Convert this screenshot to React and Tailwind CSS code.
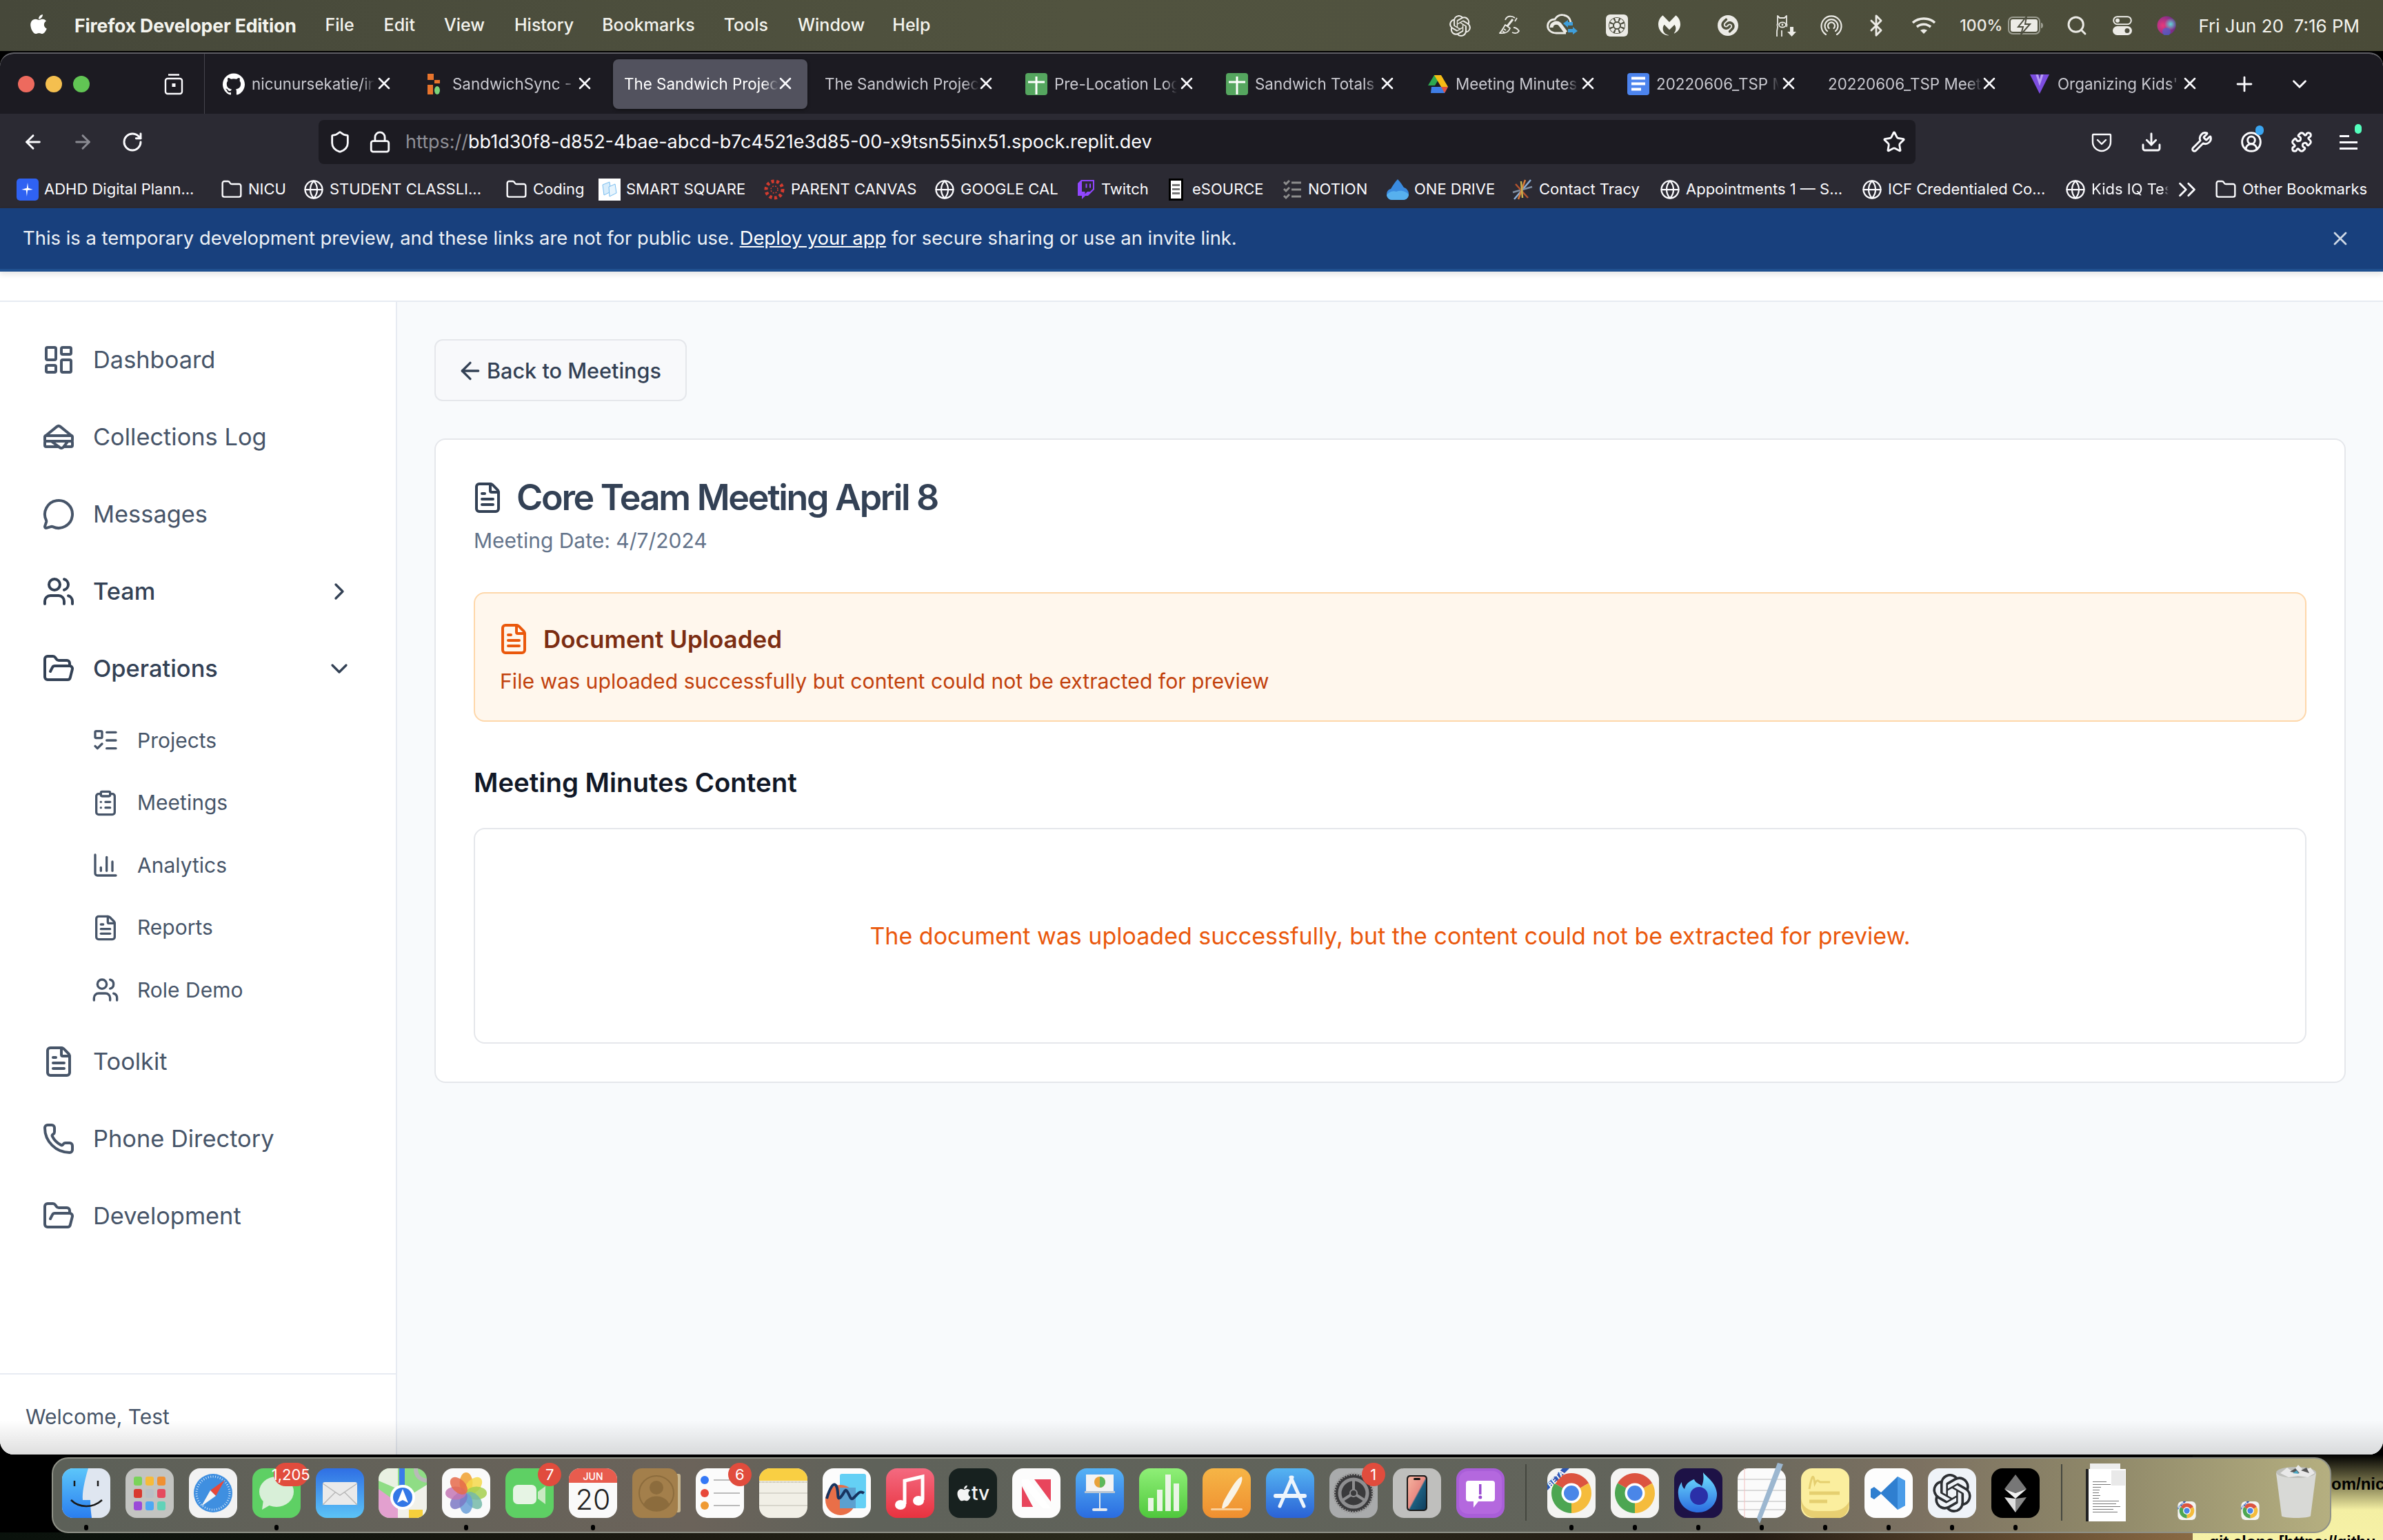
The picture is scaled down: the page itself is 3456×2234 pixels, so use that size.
import React from "react";
import {
  LayoutDashboard, Sandwich, MessageCircle, Users, FolderOpen, ListTodo, ClipboardList, ChartColumn, FileText, Phone,
  ChevronRight, ChevronDown, ArrowLeft, ArrowRight, X, RotateCw, Shield, Lock, Star, Download, Wrench, CircleUserRound,
  Puzzle, Globe, Folder, Plus, Search, Bluetooth, ChevronsRight,
} from "lucide-react";
import { SiOpenai, SiShazam, SiMalwarebytes, SiTwitch, SiGithub } from "react-icons/si";
import { FaApple } from "react-icons/fa";

function Fan() {
  return (
    <svg viewBox="0 0 32 32" className="h-[32px] w-[32px]">
      <rect width="32" height="32" rx="6" fill="#ecebe6" />
      <circle cx="16" cy="16" r="12" fill="#4c4d3e" />
      {[0, 45, 90, 135, 180, 225, 270, 315].map((a) => (
        <path key={a} d="M16 16 L13 5 L19 5 Z" fill="#ecebe6" transform={`rotate(${a} 16 16)`} />
      ))}
      <circle cx="16" cy="16" r="5" fill="#ecebe6" stroke="#4c4d3e" strokeWidth="2" />
    </svg>
  );
}
function BroomC() {
  return (
    <svg viewBox="0 0 32 32" className="h-[32px] w-[32px]" fill="none" stroke="#ecebe6" strokeWidth="1.8" strokeLinejoin="round">
      <path d="M24 5c-5-4-12-3-14 3M27 5l-3 5M20 26c4 2 8 1 10-2-2-3-5-5-8-5" />
      <path d="M21 7L13 17" strokeWidth="3" />
      <path d="M10 15l7 5c-2 5-7 8-15 7 3-3 5-7 8-12z" />
      <path d="M8 21l3 2M6 24l3 2" />
    </svg>
  );
}
function CloudSync() {
  return (
    <svg viewBox="0 0 46 34" className="h-[34px] w-[46px]" fill="none">
      <path d="M14 28C6 28 1.5 23 1.5 17.5S6 8 12 8c3-5 8-7 13-6 6 1 9 5 10 10M14 28h14" stroke="#ecebe6" strokeWidth="2.8" />
      <path d="M7 20c0-6 7-9 12-5l9 12" stroke="#ecebe6" strokeWidth="5" />
      <path d="M24 14l7-5v3h7v5h-7v3z" fill="#3f9fdc" />
      <path d="M45 25l-7 5v-3h-7v-5h7v-3z" fill="#3f9fdc" />
    </svg>
  );
}
function Alpaca() {
  return (
    <svg viewBox="0 0 30 34" className="h-[34px] w-[30px]" fill="none" stroke="#ecebe6" strokeWidth="1.8" strokeLinejoin="round">
      <path d="M2 33V26c0-3 1-4 1-7 -1-2-1-3 0-5V3l3 3h7l3-3v11c1 2 1 3 0 5" />
      <ellipse cx="10" cy="16" rx="5" ry="3.6" />
      <circle cx="10" cy="16" r="1.4" fill="#ecebe6" stroke="none" />
      <path d="M9 33V24" />
      <path d="M21 19h5v7h4l-6.5 7L17 26h4z" fill="#ecebe6" stroke="none" />
    </svg>
  );
}
function Airdrop() {
  return (
    <svg viewBox="0 0 32 32" className="h-[32px] w-[32px]" fill="none" stroke="#ecebe6" strokeWidth="2.2" strokeLinecap="round">
      <path d="M8 29a14.5 14.5 0 1 1 16 0" />
      <path d="M10 24a9.5 9.5 0 1 1 12 0" />
      <path d="M12.5 20a5 5 0 1 1 7 0" />
    </svg>
  );
}
function WifiGlyph() {
  return (
    <svg viewBox="0 0 36 26" className="h-[26px] w-[36px]" fill="none" stroke="#ecebe6" strokeWidth="3.6">
      <path d="M2 9c9-8 23-8 32 0" />
      <path d="M8 15c6-5 14-5 20 0" />
      <path d="M18 25l-5-5c3-2 7-2 10 0z" fill="#ecebe6" stroke="none" />
    </svg>
  );
}
function Battery() {
  return (
    <svg viewBox="0 0 52 26" className="h-[26px] w-[52px]">
      <rect x="1" y="1" width="45" height="24" rx="6" fill="none" stroke="#9d9e92" strokeWidth="2" />
      <rect x="4" y="4" width="39" height="18" rx="3" fill="#ecebe6" />
      <path d="M48 9c2 0 3 2 3 4s-1 4-3 4z" fill="#9d9e92" />
      <path d="M27 0L15 15h7l-3 11 13-15h-7z" fill="#ecebe6" stroke="#4c4d3e" strokeWidth="2" />
    </svg>
  );
}
function Control() {
  return (
    <svg viewBox="0 0 28 28" className="h-[28px] w-[28px]">
      <rect x="1.2" y="1.2" width="25.6" height="11" rx="5.5" fill="none" stroke="#ecebe6" strokeWidth="2" />
      <circle cx="7" cy="6.7" r="3" fill="#ecebe6" />
      <rect y="15" width="28" height="13" rx="6.5" fill="#ecebe6" />
      <circle cx="21" cy="21.5" r="3.5" fill="#4c4d3e" />
    </svg>
  );
}
function Siri() {
  return (
    <svg viewBox="0 0 28 28" className="h-[28px] w-[28px]">
      <defs>
        <radialGradient id="siriA" cx="30%" cy="50%" r="70%"><stop offset="0" stopColor="#e83a7c" /><stop offset="1" stopColor="#6a2a8a" /></radialGradient>
        <radialGradient id="siriB" cx="50%" cy="50%" r="50%"><stop offset="0" stopColor="#5cd8d8" /><stop offset="1" stopColor="#5cd8d8" stopOpacity="0" /></radialGradient>
      </defs>
      <circle cx="14" cy="14" r="13.5" fill="url(#siriA)" />
      <circle cx="20" cy="12" r="9" fill="url(#siriB)" />
      <circle cx="14" cy="23" r="6" fill="#3a6ad8" opacity=".6" />
    </svg>
  );
}

const menus = [
  ["File", "ml-[42px]"], ["Edit", "ml-[43px]"], ["View", "ml-[42px]"], ["History", "ml-[43px]"],
  ["Bookmarks", "ml-[41px]"], ["Tools", "ml-[42px]"], ["Window", "ml-[43px]"], ["Help", "ml-[40px]"],
];

function MenuBar() {
  return (
    <div className="flex h-[74px] items-center bg-[linear-gradient(90deg,#46483a,#51533f_45%,#50523f_60%,#4a4b38)] pl-[42px] pr-[34px] text-[25px] text-[#f4f4ee]">
      <FaApple className="h-[32px] w-[28px] -translate-y-[2px] text-white" />
      <span className="ml-[38px] text-[26.7px] font-bold tracking-[-0.2px]">Firefox Developer Edition</span>
      {menus.map(([m, c]) => (
        <span key={m} className={`${c} font-medium`}>{m}</span>
      ))}
      <div className="ml-auto flex items-center">
        <SiOpenai className="h-[31px] w-[31px] text-[#ecebe6]" />
        <span className="ml-[40px] flex"><BroomC /></span>
        <span className="ml-[38px] flex"><CloudSync /></span>
        <span className="ml-[40px] flex"><Fan /></span>
        <SiMalwarebytes className="ml-[44px] h-[32px] w-[32px] text-[#f4f4ee]" />
        <SiShazam className="ml-[54px] h-[30px] w-[30px] text-[#ecebe6]" />
        <span className="ml-[54px] flex"><Alpaca /></span>
        <span className="ml-[35px] flex"><Airdrop /></span>
        <Bluetooth className="ml-[32px] h-[34px] w-[34px] text-[#ecebe6]" strokeWidth={2} />
        <span className="ml-[34px] flex"><WifiGlyph /></span>
        <span className="ml-[34px] text-[23px] font-medium text-[#ecebe6]">100%</span>
        <span className="ml-[8px] flex"><Battery /></span>
        <Search className="ml-[32px] h-[32px] w-[32px] text-[#ecebe6]" strokeWidth={2.2} />
        <span className="ml-[36px] flex"><Control /></span>
        <span className="ml-[36px] flex"><Siri /></span>
        <span className="ml-[32px] whitespace-pre text-[26px] text-[#f4f4ee]">Fri Jun 20  7:16 PM</span>
      </div>
    </div>
  );
}

function SheetIcon() {
  return (
    <svg viewBox="0 0 32 32" className="h-[32px] w-[32px]">
      <rect width="32" height="32" rx="4" fill="#55a65f" />
      <path d="M4 13h24M16 5v26" stroke="#fff" strokeWidth="3" />
    </svg>
  );
}
function DocsIcon() {
  return (
    <svg viewBox="0 0 32 32" className="h-[32px] w-[32px]">
      <rect width="32" height="32" rx="4" fill="#4c84ee" />
      <path d="M6 5.5h20v4H6zM6 13.5h20v4H6zM6 21.5h14v4H6z" fill="#fff" />
    </svg>
  );
}
function DriveIcon() {
  return (
    <svg viewBox="0 0 30 28" className="h-[28px] w-[30px]">
      <path d="M10 1h10L11 16H1z" fill="#2da94f" />
      <path d="M10 1h10l10 17H20z" fill="#f6bc15" />
      <path d="M6 18h24l-5 9H5z" fill="#3f7ee6" />
      <path d="M30 18l-5 9-5-9z" fill="#e2543f" />
    </svg>
  );
}
function ReplitIcon() {
  return (
    <svg viewBox="0 0 22 32" className="h-[32px] w-[22px]">
      <path d="M1 1h9v9H1z" fill="#e8742c" />
      <path d="M11 10h8v5h-8z" fill="#e8742c" />
      <path d="M1 17h8v14H1z" fill="#e8742c" />
      <ellipse cx="15" cy="25" rx="4" ry="6" fill="#7bd37a" />
    </svg>
  );
}
function VioletIcon() {
  return (
    <svg viewBox="0 0 30 32" className="h-[32px] w-[28px]">
      <path d="M0 1h30L15 31z" fill="#7c4de0" />
      <path d="M9 1l6 18 6-18" fill="#b79cf5" />
      <path d="M13 1l2 8 2-8" fill="#5c34b8" />
    </svg>
  );
}

const tabs = [
  { t: "nicunursekatie/interactive", i: <SiGithub className="h-[32px] w-[32px] text-white" /> },
  { t: "SandwichSync - Replit", i: <ReplitIcon /> },
  { t: "The Sandwich Project", active: true },
  { t: "The Sandwich Project" },
  { t: "Pre-Location Log", i: <SheetIcon /> },
  { t: "Sandwich Totals", i: <SheetIcon /> },
  { t: "Meeting Minutes", i: <DriveIcon /> },
  { t: "20220606_TSP Meeting", i: <DocsIcon /> },
  { t: "20220606_TSP Meeting" },
  { t: "Organizing Kids' Events", i: <VioletIcon /> },
];

function TabStrip() {
  return (
    <div className="flex h-[87px] items-center bg-[#1c1b22]">
      <div className="flex h-full w-[222px] shrink-0 items-center pl-[26px]">
        <span className="h-[24px] w-[24px] rounded-full bg-[#ed6a5e]" />
        <span className="ml-[16px] h-[24px] w-[24px] rounded-full bg-[#f4bf4f]" />
        <span className="ml-[16px] h-[24px] w-[24px] rounded-full bg-[#61c554]" />
      </div>
      <div className="flex h-full w-[75px] shrink-0 items-center border-r border-[#45454d] pl-[14px]">
        <svg viewBox="0 0 32 32" className="h-[32px] w-[32px]" fill="none" stroke="#fbfbfe" strokeWidth="2.4">
          <path d="M8 2.5h16" />
          <rect x="4" y="8" width="24" height="22" rx="3" />
          <rect x="13.5" y="15" width="5" height="5" fill="#fbfbfe" stroke="none" />
        </svg>
      </div>
      <div className="ml-[10px] flex items-center gap-[9px]">
        {tabs.map((tab, n) => (
          <div key={n} className={`relative flex h-[72px] w-[282px] shrink-0 items-center rounded-[8px] pl-[16px] ${tab.active ? "bg-[#52525e] shadow-[0_1px_4px_rgba(0,0,0,.5)]" : ""}`}>
            {tab.i ? <span className="mr-[10px] flex w-[32px] shrink-0 items-center justify-center">{tab.i}</span> : null}
            <span className={`overflow-hidden whitespace-nowrap text-[22.4px] [mask-image:linear-gradient(90deg,#000_90%,transparent)] ${tab.i ? "w-[178px]" : "w-[224px]"} ${tab.active ? "text-white" : "text-[#c9c9d0]"}`}>{tab.t}</span>
            <X className="absolute left-[236px] top-[21px] h-[28px] w-[28px] text-[#fbfbfe]" strokeWidth={2.2} />
          </div>
        ))}
      </div>
      <Plus className="ml-[30px] h-[34px] w-[34px] shrink-0 text-[#fbfbfe]" strokeWidth={2} />
      <ChevronDown className="ml-[46px] h-[34px] w-[34px] shrink-0 text-[#fbfbfe]" strokeWidth={2} />
    </div>
  );
}

function PocketIcon() {
  return (
    <svg viewBox="0 0 32 32" className="h-[32px] w-[32px]" fill="none" stroke="#fbfbfe" strokeWidth="2.4" strokeLinecap="round" strokeLinejoin="round">
      <path d="M4 5h24a1 1 0 0 1 1 1v10a13 13 0 0 1-26 0V6a1 1 0 0 1 1-1z" />
      <path d="M10 13l6 6 6-6" />
    </svg>
  );
}
function MenuDot() {
  return (
    <span className="relative flex h-[32px] w-[32px] flex-col justify-center gap-[6px]">
      <span className="h-[3px] w-[14px] bg-[#fbfbfe]" />
      <span className="h-[3px] w-[26px] bg-[#fbfbfe]" />
      <span className="h-[3px] w-[26px] bg-[#fbfbfe]" />
      <span className="absolute -top-[10px] right-[0px] h-[14px] w-[10px] rounded-full bg-[#54ffbd]" />
    </span>
  );
}

function NavBar() {
  const ic = "h-[32px] w-[32px] text-[#fbfbfe]";
  return (
    <div className="flex h-[73px] items-start bg-[#2b2a33] pt-[9px]">
      <div className="flex h-[64px] w-[462px] shrink-0 items-center pl-[32px]">
        <ArrowLeft className={ic} strokeWidth={2.2} />
        <ArrowRight className="ml-[40px] h-[32px] w-[32px] text-[#8a8a92]" strokeWidth={2.2} />
        <RotateCw className={`ml-[40px] ${ic}`} strokeWidth={2.2} />
      </div>
      <div className="flex h-[64px] w-[2316px] shrink-0 items-center rounded-[8px] bg-[#1c1b22] pl-[14px] pr-[14px]">
        <Shield className="h-[34px] w-[34px] text-[#fbfbfe]" strokeWidth={2} />
        <Lock className="ml-[24px] h-[34px] w-[34px] text-[#fbfbfe]" strokeWidth={2} />
        <span className="ml-[20px] text-[27px] text-[#fbfbfe]"><span className="text-[#8f8f96]">https://</span>bb1d30f8-d852-4bae-abcd-b7c4521e3d85-00-x9tsn55inx51.spock.replit.dev</span>
        <Star className="ml-auto h-[34px] w-[34px] text-[#fbfbfe]" strokeWidth={2} />
      </div>
      <div className="flex h-[64px] flex-1 items-center pl-[254px]">
        <span className="flex w-[72px]"><PocketIcon /></span>
        <span className="flex w-[73px]"><Download className={ic} strokeWidth={2.2} /></span>
        <span className="flex w-[72px]"><Wrench className={ic} strokeWidth={2.2} /></span>
        <span className="relative flex w-[73px]">
          <CircleUserRound className={ic} strokeWidth={2.2} />
          <span className="absolute -top-[8px] left-[22px] h-[14px] w-[12px] rounded-full bg-[#3aa5f0]" />
        </span>
        <span className="flex w-[71px]"><Puzzle className={ic} strokeWidth={2.2} /></span>
        <MenuDot />
      </div>
    </div>
  );
}

function G() { return <Globe className="h-[30px] w-[30px] text-[#fbfbfe]" strokeWidth={1.8} />; }
function F() { return <Folder className="h-[32px] w-[32px] text-[#fbfbfe]" strokeWidth={1.8} />; }

const bookmarks = [
  { t: "ADHD Digital Plann...", w: "w-[296px]", i: <span className="flex h-[32px] w-[32px] items-center justify-center rounded-[5px] bg-[#2f62f2]"><svg viewBox="0 0 20 20" className="h-[22px] w-[22px]"><path d="M10 1l1 7 6 2-7 1-1 8-1-8-6-1 7-2z" fill="#fff" /></svg></span> },
  { t: "NICU", w: "w-[120px]", i: <F /> },
  { t: "STUDENT CLASSLI...", w: "w-[293px]", i: <G /> },
  { t: "Coding", w: "w-[135px]", i: <F /> },
  { t: "SMART SQUARE", w: "w-[239px]", i: <svg viewBox="0 0 32 32" className="h-[32px] w-[32px]"><rect width="32" height="32" fill="#fff" /><path d="M6 9l10-4 2 14-10 5z" fill="#d7ecfb" stroke="#78bdf0" /><path d="M15 12l9-4 2 13-10 5z" fill="#e7f4fd" stroke="#78bdf0" /></svg> },
  { t: "PARENT CANVAS", w: "w-[248px]", i: <svg viewBox="0 0 32 32" className="h-[32px] w-[32px]" fill="#d23b2f"><circle cx="16" cy="16" r="12" fill="none" stroke="#d23b2f" strokeWidth="5" strokeDasharray="4 3.4" /><circle cx="16" cy="16" r="5" fill="none" stroke="#d23b2f" strokeWidth="1.5" strokeDasharray="2 2" /></svg> },
  { t: "GOOGLE CAL", w: "w-[206px]", i: <G /> },
  { t: "Twitch", w: "w-[134px]", i: <SiTwitch className="h-[32px] w-[28px] text-[#9146ff]" /> },
  { t: "eSOURCE", w: "w-[166px]", i: <span className="mr-[5px] flex h-[32px] w-[21px] flex-col items-center justify-center gap-[3px] border-[3px] border-black bg-white"><span className="h-[3px] w-[11px] bg-[#777]" /><span className="h-[3px] w-[11px] bg-[#777]" /><span className="h-[3px] w-[11px] bg-[#777]" /></span> },
  { t: "NOTION", w: "w-[150px]", i: <svg viewBox="0 0 28 32" className="h-[32px] w-[28px]" fill="none" stroke="#8d8d8d" strokeWidth="3"><path d="M12 6h14M12 16h14M12 26h14M1 5l3 3 5-5M1 15l3 3 5-5M1 25l3 3 5-5" /></svg> },
  { t: "ONE DRIVE", w: "w-[181px]", i: <svg viewBox="0 0 32 32" className="h-[32px] w-[32px]"><path d="M16 1c4 4 7 9 9 12 4 1 7 5 7 9 0 5-3 9-8 9H7c-4 0-7-4-7-8s2-7 6-8c3-5 6-10 10-14z" fill="#3a8be0" /><path d="M8 31c-4 0-7-3-8-7 4-5 9-7 14-5 7-3 14 0 18 4 0 4-3 8-8 8z" fill="#57b0ee" /></svg> },
  { t: "Contact Tracy", w: "w-[215px]", i: <svg viewBox="0 0 32 32" className="h-[32px] w-[32px]" fill="none" strokeWidth="2.5"><path d="M4 30L28 2" stroke="#8db0d8" /><path d="M10 30L20 2" stroke="#d97b3a" /><path d="M2 20L30 12" stroke="#7f8fa3" /><path d="M6 8l18 20" stroke="#b4532e" /><path d="M16 28L14 4" stroke="#c9b34f" /></svg> },
  { t: "Appointments 1 — S...", w: "w-[293px]", i: <G /> },
  { t: "ICF Credentialed Co...", w: "w-[295px]", i: <G /> },
  { t: "Kids IQ Test", w: "w-[164px]", i: <G />, clip: true },
];

function Bookmarks() {
  return (
    <div className="flex h-[64px] items-center bg-[#2b2a33] pl-[24px] pt-[9px] text-[22px] text-[#fbfbfe]">
      {bookmarks.map((b) => (
        <div key={b.t} className={`flex shrink-0 items-center gap-[8px] ${b.w}`}>
          {b.i}
          <span className={`whitespace-nowrap ${b.clip ? "w-[112px] overflow-hidden [mask-image:linear-gradient(90deg,#000_92%,transparent)]" : ""}`}>{b.t}</span>
        </div>
      ))}
      <div className="w-[53px] shrink-0"><ChevronsRight className="-ml-[8px] h-[42px] w-[42px]" strokeWidth={1.6} /></div>
      <div className="flex shrink-0 items-center gap-[8px]"><F /><span className="whitespace-nowrap">Other Bookmarks</span></div>
    </div>
  );
}

function Banner() {
  return (
    <div className="relative z-10 flex h-[92px] items-center border-b-[4px] border-[#20508f] bg-[#18407d] pl-[33px] pr-[46px] text-[27.4px] text-[#eef2f7] shadow-[0_4px_8px_rgba(0,0,0,.1)]">
      <span>This is a temporary development preview, and these links are not for public use. <span className="text-white underline">Deploy your app</span> for secure sharing or use an invite link.</span>
      <X className="ml-auto h-[32px] w-[32px] text-[#cfd9e6]" strokeWidth={2} />
    </div>
  );
}

const navTop = [
  { t: "Dashboard", I: LayoutDashboard },
  { t: "Collections Log", I: Sandwich },
  { t: "Messages", I: MessageCircle },
  { t: "Team", I: Users, strong: true, right: <ChevronRight className="h-[40px] w-[40px]" strokeWidth={2} /> },
  { t: "Operations", I: FolderOpen, strong: true, right: <ChevronDown className="h-[40px] w-[40px]" strokeWidth={2} /> },
];
const navSub = [
  { t: "Projects", I: ListTodo },
  { t: "Meetings", I: ClipboardList },
  { t: "Analytics", I: ChartColumn },
  { t: "Reports", I: FileText },
  { t: "Role Demo", I: Users },
];
const navBottom = [
  { t: "Toolkit", I: FileText },
  { t: "Phone Directory", I: Phone },
  { t: "Development", I: FolderOpen },
];

function NavItem({ n }) {
  const I = n.I;
  return (
    <div className={`flex h-[112px] items-center pl-[61px] pr-[62px] text-[34.4px] ${n.strong ? "font-medium text-[#334155]" : "text-[#475569]"}`}>
      <I className="h-[48px] w-[48px] shrink-0" strokeWidth={2} />
      <span className="ml-[26px]">{n.t}</span>
      {n.right ? <span className="ml-auto flex">{n.right}</span> : null}
    </div>
  );
}

function Sidebar() {
  return (
    <aside className="flex w-[576px] shrink-0 flex-col border-r-2 border-[#e7ebf2] bg-white">
      <nav className="flex-1 pt-[28px]">
        {navTop.map((n) => <NavItem key={n.t} n={n} />)}
        <div className="mb-[2px] mt-[3px]">
          {navSub.map((n) => {
            const I = n.I;
            return (
              <div key={n.t} className="flex h-[90.5px] items-center pl-[133px] text-[30px] text-[#475569]">
                <I className="h-[40px] w-[40px] shrink-0" strokeWidth={2} />
                <span className="ml-[26px]">{n.t}</span>
              </div>
            );
          })}
        </div>
        {navBottom.map((n) => <NavItem key={n.t} n={n} />)}
      </nav>
      <div className="flex h-[118px] items-start border-t-2 border-[#e7ebf2] pl-[37px] pt-[37px] text-[30px] leading-[48px] text-[#475569]">Welcome, Test</div>
    </aside>
  );
}

function Main() {
  return (
    <main className="flex-1 bg-[#f8fafc] pl-[54px] pr-[54px] pt-[54px]">
      <button className="flex h-[90px] w-[366px] items-center rounded-[12px] border-2 border-[#e5e7eb] bg-[#f8f9fb] pl-[30px] pt-[2px] text-[30.6px] font-medium text-[#334155]">
        <ArrowLeft className="h-[40px] w-[40px]" strokeWidth={2} />
        <span className="ml-[4px]">Back to Meetings</span>
      </button>
      <section className="mt-[54px] rounded-[16px] border-2 border-[#e5e7eb] bg-white px-[55px] pb-[55px] pt-[52px]">
        <div className="flex h-[64px] items-center">
          <FileText className="-ml-[4px] h-[48px] w-[48px] text-[#334155]" strokeWidth={2} />
          <h1 className="ml-[18px] text-[52px] font-semibold leading-[64px] tracking-[-2.3px] text-[#334155]">Core Team Meeting April 8</h1>
        </div>
        <p className="mt-[6px] text-[30px] leading-[48px] text-[#64748b]">Meeting Date: 4/7/2024</p>
        <div className="mt-[51px] rounded-[16px] border-2 border-[#fed7aa] bg-[#fff7ed] px-[36px] pb-[33px] pt-[42px]">
          <div className="flex h-[48px] items-center">
            <FileText className="-ml-[4px] h-[48px] w-[48px] text-[#ea580c]" strokeWidth={2} />
            <h3 className="ml-[19px] text-[35px] font-semibold leading-[48px] text-[#7c2d12]">Document Uploaded</h3>
          </div>
          <p className="mt-[13px] text-[30.2px] leading-[48px] text-[#c2410c]">File was uploaded successfully but content could not be extracted for preview</p>
        </div>
        <h2 className="mt-[60px] text-[38.4px] font-semibold leading-[56px] text-[#111827]">Meeting Minutes Content</h2>
        <div className="mt-[38px] flex h-[313px] items-center justify-center rounded-[16px] border-2 border-[#e5e7eb] bg-white text-[34px] text-[#ea580c]">
          The document was uploaded successfully, but the content could not be extracted for preview.
        </div>
      </section>
    </main>
  );
}

function Tile({ children, badge, dot, className = "" }) {
  return (
    <div className={`relative h-[72px] w-[70px] shrink-0 ${className}`}>
      <svg viewBox="0 0 70 72" className="h-[72px] w-[70px] overflow-visible">{children}</svg>
      {badge ? <span className={`absolute -top-[8px] flex h-[34px] items-center justify-center rounded-full bg-[#e14c3d] text-[22px] text-white ${badge.length > 1 ? "-right-[11px] w-[50px] text-[19px]" : "-right-[11px] w-[34px]"}`}>{badge}</span> : null}
      {dot ? <span className="absolute -bottom-[18px] left-[32px] h-[8px] w-[6px] rounded-full bg-black" /> : null}
    </div>
  );
}
const Bg = ({ f }) => <rect x="0" y="0" width="70" height="72" rx="16" fill={f} />;

function ChromeArt({ beta }) {
  return (
    <>
      <Bg f="#f4f4f2" />
      <path d="M35 36L9.9 21.5A29 29 0 0 1 60.1 21.5Z" fill="#dc5440" />
      <path d="M35 36L60.1 21.5A29 29 0 0 1 35 65Z" fill="#f5bc3c" />
      <path d="M35 36L35 65A29 29 0 0 1 9.9 21.5Z" fill="#4da652" />
      <circle cx="35" cy="36" r="14.5" fill="#fff" />
      <circle cx="35" cy="36" r="11" fill="#4a86e8" />
      {beta ? (
        <g>
          <path d="M0 32L0 22 22 0H32z" fill="#2d58b5" />
          <text x="4" y="26" fontSize="11" fontWeight="700" fill="#fff" fontFamily="Inter,sans-serif" transform="rotate(-48 8 26)" letterSpacing=".5" fontStyle="italic">BETA</text>
        </g>
      ) : null}
    </>
  );
}

function Dock() {
  return (
    <div className="ml-[75px] mt-[4px] flex h-[110px] w-[3306px] items-start gap-[21.9px] rounded-[24px] border-2 border-[#8f9187] bg-[linear-gradient(90deg,#5c6058_0%,#6b635a_28%,#5f625a_36%,#62645b_70%,#7c7161_82%,#8f8869_90%,#b5af80_100%)] pl-[13px] pt-[14px]">
      <Tile dot>
        <defs><linearGradient id="fa" x1="0" y1="0" x2="0" y2="1"><stop offset="0" stopColor="#5cc6fa" /><stop offset="1" stopColor="#2a7ef0" /></linearGradient></defs>
        <Bg f="#dfe6f0" />
        <path d="M16 0H38C32 20 29 36 30 46H41C41 56 42 64 43 72H16A16 16 0 0 1 0 56V16A16 16 0 0 1 16 0Z" fill="url(#fa)" />
        <path d="M18 18v8M52 18v8" stroke="#1a1a1a" strokeWidth="2.5" />
        <path d="M13 46c12 12 32 12 45 0" fill="none" stroke="#1a1a1a" strokeWidth="2.5" />
      </Tile>
      <Tile>
        <Bg f="#c3c4c1" />
        {[["#7ad35a", 12, 12], ["#f6bb3a", 29, 12], ["#f09033", 46, 12], ["#d8392e", 12, 30], ["#b9c0c6", 29, 30], ["#e54a5e", 46, 30], ["#9a4ad8", 12, 48], ["#4da8f4", 29, 48], ["#62d2b8", 46, 48]].map(([c, x, y]) => (
          <rect key={c} x={x} y={y} width="12" height="13" rx="3" fill={c} />
        ))}
      </Tile>
      <Tile>
        <Bg f="#f2f2f2" />
        <circle cx="35" cy="36" r="28" fill="#3f8fe0" />
        <circle cx="35" cy="36" r="24" fill="none" stroke="#cfe4f8" strokeWidth="3" strokeDasharray="1 2.5" />
        <path d="M52 17L31 32l8 8z" fill="#e8483a" />
        <path d="M18 55l13-23 8 8z" fill="#f5f5f5" />
      </Tile>
      <Tile badge="1,205" dot>
        <Bg f="#5ed064" />
        <ellipse cx="35" cy="34" rx="25" ry="22" fill="#d8efd8" />
        <path d="M16 46l-2 14 14-8z" fill="#d8efd8" />
      </Tile>
      <Tile>
        <defs><linearGradient id="ma" x1="0" y1="0" x2="0" y2="1"><stop offset="0" stopColor="#2f6fe4" /><stop offset="1" stopColor="#5cc4f7" /></linearGradient></defs>
        <Bg f="url(#ma)" />
        <rect x="10" y="20" width="50" height="33" rx="3" fill="#eaeaea" />
        <path d="M10 22l25 17 25-17M10 53l18-18M60 53L42 35" fill="none" stroke="#b8b8b8" strokeWidth="1.5" />
      </Tile>
      <Tile>
        <clipPath id="mc"><rect width="70" height="72" rx="16" /></clipPath>
        <g clipPath="url(#mc)">
          <rect width="70" height="72" fill="#8fdd85" />
          <path d="M0 30L28 50 28 72H0z" fill="#e3a0cf" />
          <path d="M0 0h28v30L0 18z" fill="#f3f3ec" opacity=".9" />
          <path d="M28 50L70 24V72H28z" fill="#f1f1ea" />
          <path d="M44 60h20v12H44z" fill="#f5cf3c" />
          <path d="M30 0h8v30h-8z" fill="#3a7bea" />
          <path d="M54 0c0 12 6 16 16 18" fill="none" stroke="#b9b9b9" strokeWidth="6" />
          <circle cx="35" cy="42" r="18" fill="#fff" />
          <circle cx="35" cy="42" r="14" fill="#3277e6" />
          <path d="M35 30l8 20-8-4-8 4z" fill="#fff" />
        </g>
      </Tile>
      <Tile dot>
        <Bg f="#fafafa" />
        {[["#f0a02f", 0], ["#f5d84a", 45], ["#a4cf4d", 90], ["#74b9a8", 135], ["#6a9fd8", 180], ["#7b78c4", 225], ["#c376b4", 270], ["#e56a4a", 315]].map(([c, a]) => (
          <ellipse key={a} cx="35" cy="21" rx="9.5" ry="15" fill={c} opacity=".85" transform={`rotate(${a} 35 36)`} />
        ))}
      </Tile>
      <Tile badge="7">
        <Bg f="#5ed064" />
        <rect x="11" y="24" width="34" height="28" rx="7" fill="#e6f4e4" />
        <path d="M47 34l11-8v26l-11-8z" fill="#c8e9c2" />
      </Tile>
      <Tile dot>
        <Bg f="#fafafa" />
        <path d="M16 0H54A16 16 0 0 1 70 16V21H0V16A16 16 0 0 1 16 0Z" fill="#e85c4e" />
        <text x="35" y="17" textAnchor="middle" fontSize="14" fontWeight="500" fill="#fff" fontFamily="Inter,sans-serif">JUN</text>
        <text x="35" y="60" textAnchor="middle" fontSize="41" fontWeight="300" fill="#222" fontFamily="Inter,sans-serif">20</text>
      </Tile>
      <Tile>
        <rect x="60" y="8" width="10" height="56" rx="3" fill="#c8b790" />
        <rect x="0" y="0" width="66" height="72" rx="14" fill="#a37f4b" />
        <circle cx="35" cy="36" r="25" fill="none" stroke="#8c6c3d" strokeWidth="2" />
        <circle cx="35" cy="28" r="10" fill="#8c6c3d" />
        <path d="M16 54c4-18 34-18 38 0a25 25 0 0 1-38 0z" fill="#8c6c3d" />
      </Tile>
      <Tile badge="6">
        <Bg f="#fbfbfb" />
        <circle cx="13" cy="17" r="6" fill="#3478f6" /><circle cx="13" cy="36" r="6" fill="#e8483a" /><circle cx="13" cy="54" r="6" fill="#ef9a33" />
        <path d="M26 17h38M26 36h38M26 54h38" stroke="#bbb" strokeWidth="2" />
      </Tile>
      <Tile>
        <Bg f="#f1efe6" />
        <path d="M16 0H54A16 16 0 0 1 70 16V18H0V16A16 16 0 0 1 16 0Z" fill="#f9cf43" />
        <path d="M0 36h70M0 54h70" stroke="#d8d6cc" strokeWidth="2" />
        <path d="M0 20h70" stroke="#bdb9a8" strokeWidth="2" strokeDasharray="1 1" />
      </Tile>
      <Tile>
        <Bg f="#fcfcfc" />
        <rect x="25" y="8" width="38" height="50" rx="3" fill="#64d0f5" />
        <circle cx="26" cy="46" r="22" fill="#e96f48" />
        <rect x="25" y="28" width="23" height="30" fill="#5ba0d0" />
        <path d="M6 44c4-14 10-26 14-18s0 22 6 16 6-14 10-8 4 14 10 8 8-10 14-6" fill="none" stroke="#17335f" strokeWidth="4" />
      </Tile>
      <Tile>
        <defs><linearGradient id="mu" x1="0" y1="0" x2="0" y2="1"><stop offset="0" stopColor="#f46a80" /><stop offset="1" stopColor="#e8323f" /></linearGradient></defs>
        <Bg f="url(#mu)" />
        <path d="M27 52V18l26-6v34" fill="none" stroke="#fff" strokeWidth="5" />
        <ellipse cx="21" cy="53" rx="8" ry="7" fill="#fff" /><ellipse cx="47" cy="47" rx="8" ry="7" fill="#fff" />
      </Tile>
      <Tile>
        <Bg f="#17211f" />
        <foreignObject x="0" y="0" width="70" height="72">
          <div className="flex h-[72px] w-[70px] items-center justify-center text-[#f4f4f4]">
            <FaApple className="h-[26px] w-[22px]" />
            <span className="text-[28px] font-medium leading-none">tv</span>
          </div>
        </foreignObject>
      </Tile>
      <Tile>
        <Bg f="#fcfcfc" />
        <path d="M14 20v36h16L14 26zM33 16l23 32V16z" fill="#e8455c" />
        <path d="M14 16h10l32 42H44L14 22z" fill="#fff" />
        <path d="M14 30l16 26H14zM32 16h24v32z" fill="#e8455c" />
      </Tile>
      <Tile>
        <defs><linearGradient id="ke" x1="0" y1="0" x2="0" y2="1"><stop offset="0" stopColor="#56b2f5" /><stop offset="1" stopColor="#2a6ce0" /></linearGradient></defs>
        <Bg f="url(#ke)" />
        <rect x="15" y="9" width="40" height="26" fill="#f3f3f3" />
        <circle cx="35" cy="20" r="8" fill="#e9a23a" />
        <path d="M35 20V12a8 8 0 0 1 0 16z" fill="#5db95b" />
        <rect x="13" y="33" width="44" height="3" fill="#b8c5d2" />
        <rect x="34" y="36" width="2" height="24" fill="#dfe6ec" />
        <rect x="24" y="58" width="22" height="4" rx="2" fill="#e6eaef" />
      </Tile>
      <Tile>
        <defs><linearGradient id="nu" x1="0" y1="0" x2="0" y2="1"><stop offset="0" stopColor="#8fef77" /><stop offset="1" stopColor="#4fc83c" /></linearGradient></defs>
        <Bg f="url(#nu)" />
        <rect x="13" y="43" width="8" height="19" fill="#eaf5e5" /><rect x="26" y="31" width="8" height="31" fill="#eaf5e5" /><rect x="38" y="9" width="8" height="53" fill="#eaf5e5" /><rect x="50" y="22" width="8" height="40" fill="#eaf5e5" />
      </Tile>
      <Tile>
        <defs><linearGradient id="pa" x1="0" y1="0" x2="0" y2="1"><stop offset="0" stopColor="#f6b546" /><stop offset="1" stopColor="#ef8f30" /></linearGradient></defs>
        <Bg f="url(#pa)" />
        <path d="M57 12c2 6-2 16-20 42l-9 6c0-6 2-12 6-18C42 28 50 14 57 12z" fill="#f9f3e6" />
        <rect x="12" y="58" width="46" height="3" rx="1.5" fill="#f9cf9a" />
      </Tile>
      <Tile>
        <defs><linearGradient id="ap" x1="0" y1="0" x2="0" y2="1"><stop offset="0" stopColor="#55b4f2" /><stop offset="1" stopColor="#2a62d6" /></linearGradient></defs>
        <Bg f="url(#ap)" />
        <path d="M36 13l19 42M38 13L20 55" stroke="#eef5fc" strokeWidth="5" strokeLinecap="round" />
        <rect x="11" y="37" width="48" height="6" rx="3" fill="#eef5fc" />
      </Tile>
      <Tile badge="1">
        <Bg f="#a9abac" />
        <circle cx="35" cy="36" r="28" fill="#3a3a3c" />
        <circle cx="35" cy="36" r="28" fill="none" stroke="#9a9a9a" strokeWidth="4" strokeDasharray="2 2" />
        <circle cx="35" cy="36" r="20" fill="none" stroke="#8e8e90" strokeWidth="5" />
        <path d="M35 36V16M35 36L18 47M35 36l17 11" stroke="#8e8e90" strokeWidth="4" />
        <circle cx="35" cy="36" r="5" fill="#3a3a3c" stroke="#8e8e90" strokeWidth="2" />
      </Tile>
      <Tile>
        <defs><linearGradient id="ip" x1="0" y1="0" x2="1" y2="1"><stop offset="0" stopColor="#f5b39f" /><stop offset=".5" stopColor="#e88b83" /><stop offset=".55" stopColor="#1c5f80" /><stop offset="1" stopColor="#0e3d5c" /></linearGradient></defs>
        <Bg f="#bfbfbd" />
        <rect x="20" y="10" width="30" height="52" rx="5" fill="#1a1a1a" />
        <rect x="22" y="12" width="26" height="48" rx="4" fill="url(#ip)" />
        <rect x="30" y="14" width="10" height="3" rx="1.5" fill="#111" />
      </Tile>
      <Tile>
        <Bg f="#a95ed8" />
        <rect x="4" y="4" width="62" height="62" rx="13" fill="#b468de" />
        <path d="M18 18h34a4 4 0 0 1 4 4v22a4 4 0 0 1-4 4H32l-7 9v-9h-7a4 4 0 0 1-4-4V22a4 4 0 0 1 4-4z" fill="#fff" />
        <rect x="33" y="23" width="3.5" height="15" fill="#9a4ad0" /><circle cx="34.8" cy="42" r="2.5" fill="#9a4ad0" />
      </Tile>
      <span className="ml-[9px] h-[82px] w-[2px] shrink-0 -translate-y-[6px] bg-[#45473f]" />
      <Tile dot className="ml-[8px]"><ChromeArt beta /></Tile>
      <Tile dot><ChromeArt /></Tile>
      <Tile dot>
        <defs><linearGradient id="ff" x1="0" y1="0" x2="0" y2="1"><stop offset="0" stopColor="#6fe0ff" /><stop offset="1" stopColor="#2a6ce0" /></linearGradient></defs>
        <Bg f="#1d1246" />
        <path d="M42 6c6 8 18 14 20 30 1 16-12 28-27 28S7 54 6 38c-1-8 2-14 5-18 0 6 2 8 4 10 2-8 8-12 14-14 2 6 8 6 11 10 4-10 2-16 2-20z" fill="url(#ff)" />
        <circle cx="36" cy="40" r="13" fill="#2a2fa8" />
      </Tile>
      <Tile dot>
        <Bg f="#fbfbfb" />
        <path d="M0 16h70M0 32h70M0 48h70M0 60h70" stroke="#d9d9d9" strokeWidth="2" />
        <path d="M10 0v72" stroke="#f4c0c0" />
        <path d="M66 -6L58 -8 28 72l4 8z" fill="#9cb7d0" />
      </Tile>
      <Tile dot>
        <Bg f="#fbee9e" />
        <path d="M0 44c0 20 8 28 24 28h30c8 0 16-8 16-24 -6 10-14 14-26 14H24C10 62 2 56 0 44z" fill="#e7cf72" />
        <path d="M12 30c4-22 6-22 8-8 4-8 6-2 8-2h14" fill="none" stroke="#e5cf70" strokeWidth="3" />
        <path d="M12 36h44M12 48h26" stroke="#e5cf70" strokeWidth="5" />
      </Tile>
      <Tile dot>
        <Bg f="#fdfdfd" />
        <path d="M48 12l11 6v36l-11 6L24 37l-10 8-5-3v-12l5-3 10 8z" fill="#2f7fd0" />
        <path d="M48 12v48l11-6V18z" fill="#4a9ce8" />
      </Tile>
      <Tile dot>
        <Bg f="#eff3f8" />
        <foreignObject x="0" y="0" width="70" height="72">
          <div className="flex h-[72px] w-[70px] items-center justify-center">
            <SiOpenai className="h-[56px] w-[56px] text-[#2c2f33]" />
          </div>
        </foreignObject>
      </Tile>
      <Tile dot>
        <Bg f="#000" />
        <path d="M35 9L19 30l16 6 16-6z" fill="#777" />
        <path d="M19 30l16 6 16-6-16 14z" fill="#f2f2f2" />
        <path d="M35 44L19 42l16 22z" fill="#e0e0e0" />
        <path d="M35 44l16-2-16 22z" fill="#8a8a8a" />
      </Tile>
      <span className="ml-[9px] h-[82px] w-[2px] shrink-0 -translate-y-[6px] bg-[#45473f]" />
      <div className="relative -mt-[7px] ml-[13px] h-[84px] w-[58px] shrink-0">
        <span className="absolute left-[6px] top-0 h-[20px] w-[44px] bg-[#ededed]" />
        <span className="absolute bottom-0 left-0 top-[8px] w-[6px] bg-[#222]" />
        <div className="absolute bottom-0 left-[4px] right-0 top-[8px] flex flex-col gap-[3px] bg-white pl-[6px] pt-[18px]">
          {["w-[20px]", "w-[26px]", "w-[12px]", "w-[10px]", "w-[9px]", "w-[11px]", "w-[9px]", "w-[38px]", "w-[34px]", "w-[40px]", "w-[30px]", "w-[36px]"].map((c, i) => (
            <span key={i} className={`h-[1px] ${c} bg-[#777]`} />
          ))}
        </div>
        <span className="absolute right-[1px] top-[10px] h-[22px] w-[20px] bg-[#e9e9e9]" />
      </div>
      <div className="ml-[53px] mt-[48px] h-[27px] w-[27px] shrink-0">
        <svg viewBox="0 0 70 72" className="h-[27px] w-[27px]"><ChromeArt beta /></svg>
      </div>
      <div className="ml-[43px] mt-[48px] h-[27px] w-[27px] shrink-0">
        <svg viewBox="0 0 70 72" className="h-[27px] w-[27px]"><ChromeArt beta /></svg>
      </div>
      <div className="-mt-[7px] h-[82px] w-[62px] shrink-0">
        <svg viewBox="0 0 62 82" className="h-[82px] w-[62px]">
          <path d="M2 14L10 76c1 4 41 4 42 0l8-62z" fill="#d8d9d6" />
          <ellipse cx="31" cy="13" rx="29" ry="8" fill="#bfc0bc" />
          <path d="M8 14l10-8 8 6 8-10 8 8 10-4 6 8-10 6-14-2-14 2z" fill="#e8e8e8" />
          <path d="M22 12l8-5 6 7zM38 10l8-4 4 8z" fill="#555" />
          <path d="M26 14l6-4 3 5z" fill="#4da8c4" />
        </svg>
      </div>
    </div>
  );
}

export default function App() {
  return (
    <div className="relative h-[2234px] w-[3456px] overflow-hidden bg-black font-['Inter',sans-serif]">
      <div className="absolute bottom-0 left-[0px] h-[11px] w-[3180px] bg-[linear-gradient(90deg,#0a120c,#1c1a12_30%,#2a2a1c_50%,#241c14_80%,#8a6a44_100%)]" />
      <div className="absolute bottom-0 right-0 h-[124px] w-[276px] bg-[linear-gradient(180deg,#000_0%,#6e6a45_30%,#f4efa3_65%,#f6f1a6_100%)]" />
      <span className="absolute left-[3381px] top-[2137px] whitespace-nowrap font-['Liberation_Sans',sans-serif] text-[24px] font-bold leading-[32px] text-black">om/nicu</span>
      <span className="absolute left-[3204px] top-[2221px] whitespace-nowrap font-['Liberation_Sans',sans-serif] text-[23px] font-bold leading-[32px] text-black">git clone [https://githu</span>
      <div className="relative">
        <MenuBar />
        <div className="relative mt-[2px] flex h-[2034px] flex-col overflow-hidden rounded-[20px] border-t-2 border-[#5e5e64] bg-white">
          <TabStrip />
          <NavBar />
          <Bookmarks />
          <Banner />
          <div className="h-[44px] shrink-0 border-b-2 border-[#e7ebf2] bg-white" />
          <div className="flex flex-1">
            <Sidebar />
            <Main />
          </div>
          <div className="pointer-events-none absolute inset-x-0 bottom-0 h-[50px] bg-[linear-gradient(180deg,rgba(0,0,0,0),rgba(0,0,0,.13))]" />
        </div>
        <Dock />
      </div>
    </div>
  );
}
